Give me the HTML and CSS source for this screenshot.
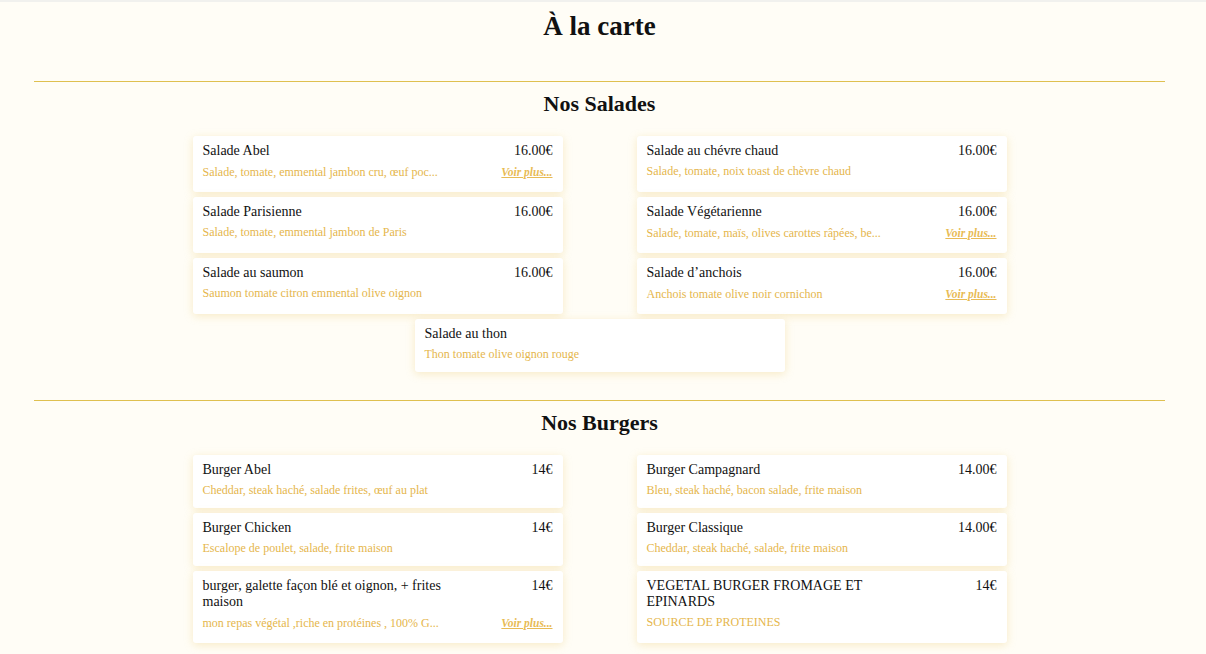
FILE: index.html
```html
<!DOCTYPE html>
<html lang="fr">
<head>
<meta charset="utf-8">
<title>À la carte</title>
<link rel="stylesheet" href="styles.css">
</head>
<body>
<div class="page">
  <h1 class="title">À la carte</h1>

  <section class="section">
    <h2 class="section-title">Nos Salades</h2>
    <div class="cards">
      <div class="card">
        <div class="card-top"><span class="name">Salade Abel</span><span class="price">16.00€</span></div>
        <div class="card-bottom"><span class="desc">Salade, tomate, emmental jambon cru, œuf poc...</span><a class="more" href="#">Voir plus...</a></div>
      </div>
      <div class="card">
        <div class="card-top"><span class="name">Salade au chévre chaud</span><span class="price">16.00€</span></div>
        <div class="card-bottom"><span class="desc">Salade, tomate, noix toast de chèvre chaud</span></div>
      </div>
      <div class="card">
        <div class="card-top"><span class="name">Salade Parisienne</span><span class="price">16.00€</span></div>
        <div class="card-bottom"><span class="desc">Salade, tomate, emmental jambon de Paris</span></div>
      </div>
      <div class="card">
        <div class="card-top"><span class="name">Salade Végétarienne</span><span class="price">16.00€</span></div>
        <div class="card-bottom"><span class="desc">Salade, tomate, maïs, olives carottes râpées, be...</span><a class="more" href="#">Voir plus...</a></div>
      </div>
      <div class="card">
        <div class="card-top"><span class="name">Salade au saumon</span><span class="price">16.00€</span></div>
        <div class="card-bottom"><span class="desc">Saumon tomate citron emmental olive oignon</span></div>
      </div>
      <div class="card">
        <div class="card-top"><span class="name">Salade d’anchois</span><span class="price">16.00€</span></div>
        <div class="card-bottom"><span class="desc">Anchois tomate olive noir cornichon</span><a class="more" href="#">Voir plus...</a></div>
      </div>
      <div class="card">
        <div class="card-top"><span class="name">Salade au thon</span><span class="price"></span></div>
        <div class="card-bottom"><span class="desc">Thon tomate olive oignon rouge</span></div>
      </div>
    </div>
  </section>

  <section class="section">
    <h2 class="section-title">Nos Burgers</h2>
    <div class="cards">
      <div class="card">
        <div class="card-top"><span class="name">Burger Abel</span><span class="price">14€</span></div>
        <div class="card-bottom"><span class="desc">Cheddar, steak haché, salade frites, œuf au plat</span></div>
      </div>
      <div class="card">
        <div class="card-top"><span class="name">Burger Campagnard</span><span class="price">14.00€</span></div>
        <div class="card-bottom"><span class="desc">Bleu, steak haché, bacon salade, frite maison</span></div>
      </div>
      <div class="card">
        <div class="card-top"><span class="name">Burger Chicken</span><span class="price">14€</span></div>
        <div class="card-bottom"><span class="desc">Escalope de poulet, salade, frite maison</span></div>
      </div>
      <div class="card">
        <div class="card-top"><span class="name">Burger Classique</span><span class="price">14.00€</span></div>
        <div class="card-bottom"><span class="desc">Cheddar, steak haché, salade, frite maison</span></div>
      </div>
      <div class="card">
        <div class="card-top"><span class="name">burger, galette façon blé et oignon, + frites maison</span><span class="price">14€</span></div>
        <div class="card-bottom"><span class="desc">mon repas végétal ,riche en protéines , 100% G...</span><a class="more" href="#">Voir plus...</a></div>
      </div>
      <div class="card">
        <div class="card-top"><span class="name">VEGETAL BURGER FROMAGE ET EPINARDS</span><span class="price">14€</span></div>
        <div class="card-bottom"><span class="desc">SOURCE DE PROTEINES</span></div>
      </div>
    </div>
  </section>
</div>
</body>
</html>
```

FILE: styles.css
```css
html, body {
  margin: 0;
  padding: 0;
  background: #fffdf6;
}
body {
  font-family: "Liberation Serif", "Times New Roman", serif;
  color: #111;
  border-top: 2px solid #f1f1ee;
}
.page {
  margin: 0 41px 0 34px;
}
.title {
  margin: 0;
  padding-top: 9px;
  height: 79px;
  box-sizing: border-box;
  text-align: center;
  font-size: 27px;
  line-height: 30px;
  font-weight: bold;
}
.section {
  border-top: 1px solid #dfc050;
  padding-top: 10px;
  padding-bottom: 23px;
}
.section-title {
  margin: 0 0 20px;
  text-align: center;
  font-size: 22px;
  line-height: 24px;
  font-weight: bold;
}
.cards {
  display: flex;
  flex-wrap: wrap;
  justify-content: center;
  width: 888px;
  margin: 0 auto;
}
.card {
  width: 370px;
  box-sizing: border-box;
  margin: 0 37px 5px;
  padding: 7px 10px 10px 10px;
  background: #fff;
  border-radius: 3px;
  box-shadow: 0 2px 8px rgba(232, 200, 110, 0.35);
}
.card-top {
  display: flex;
  justify-content: space-between;
  align-items: flex-start;
}
.name {
  max-width: 70%;
  font-size: 14px;
  line-height: 16px;
}
.price {
  font-size: 14px;
  line-height: 16px;
}
.card-bottom {
  display: flex;
  justify-content: space-between;
  align-items: baseline;
  margin-top: 4px;
  min-height: 16px;
}
.desc {
  font-size: 12px;
  line-height: 16px;
  color: #e5b64c;
}
.more {
  font-size: 11.5px;
  line-height: 19px;
  font-style: italic;
  font-weight: bold;
  color: #e8bb55;
  text-decoration: underline;
}
```
